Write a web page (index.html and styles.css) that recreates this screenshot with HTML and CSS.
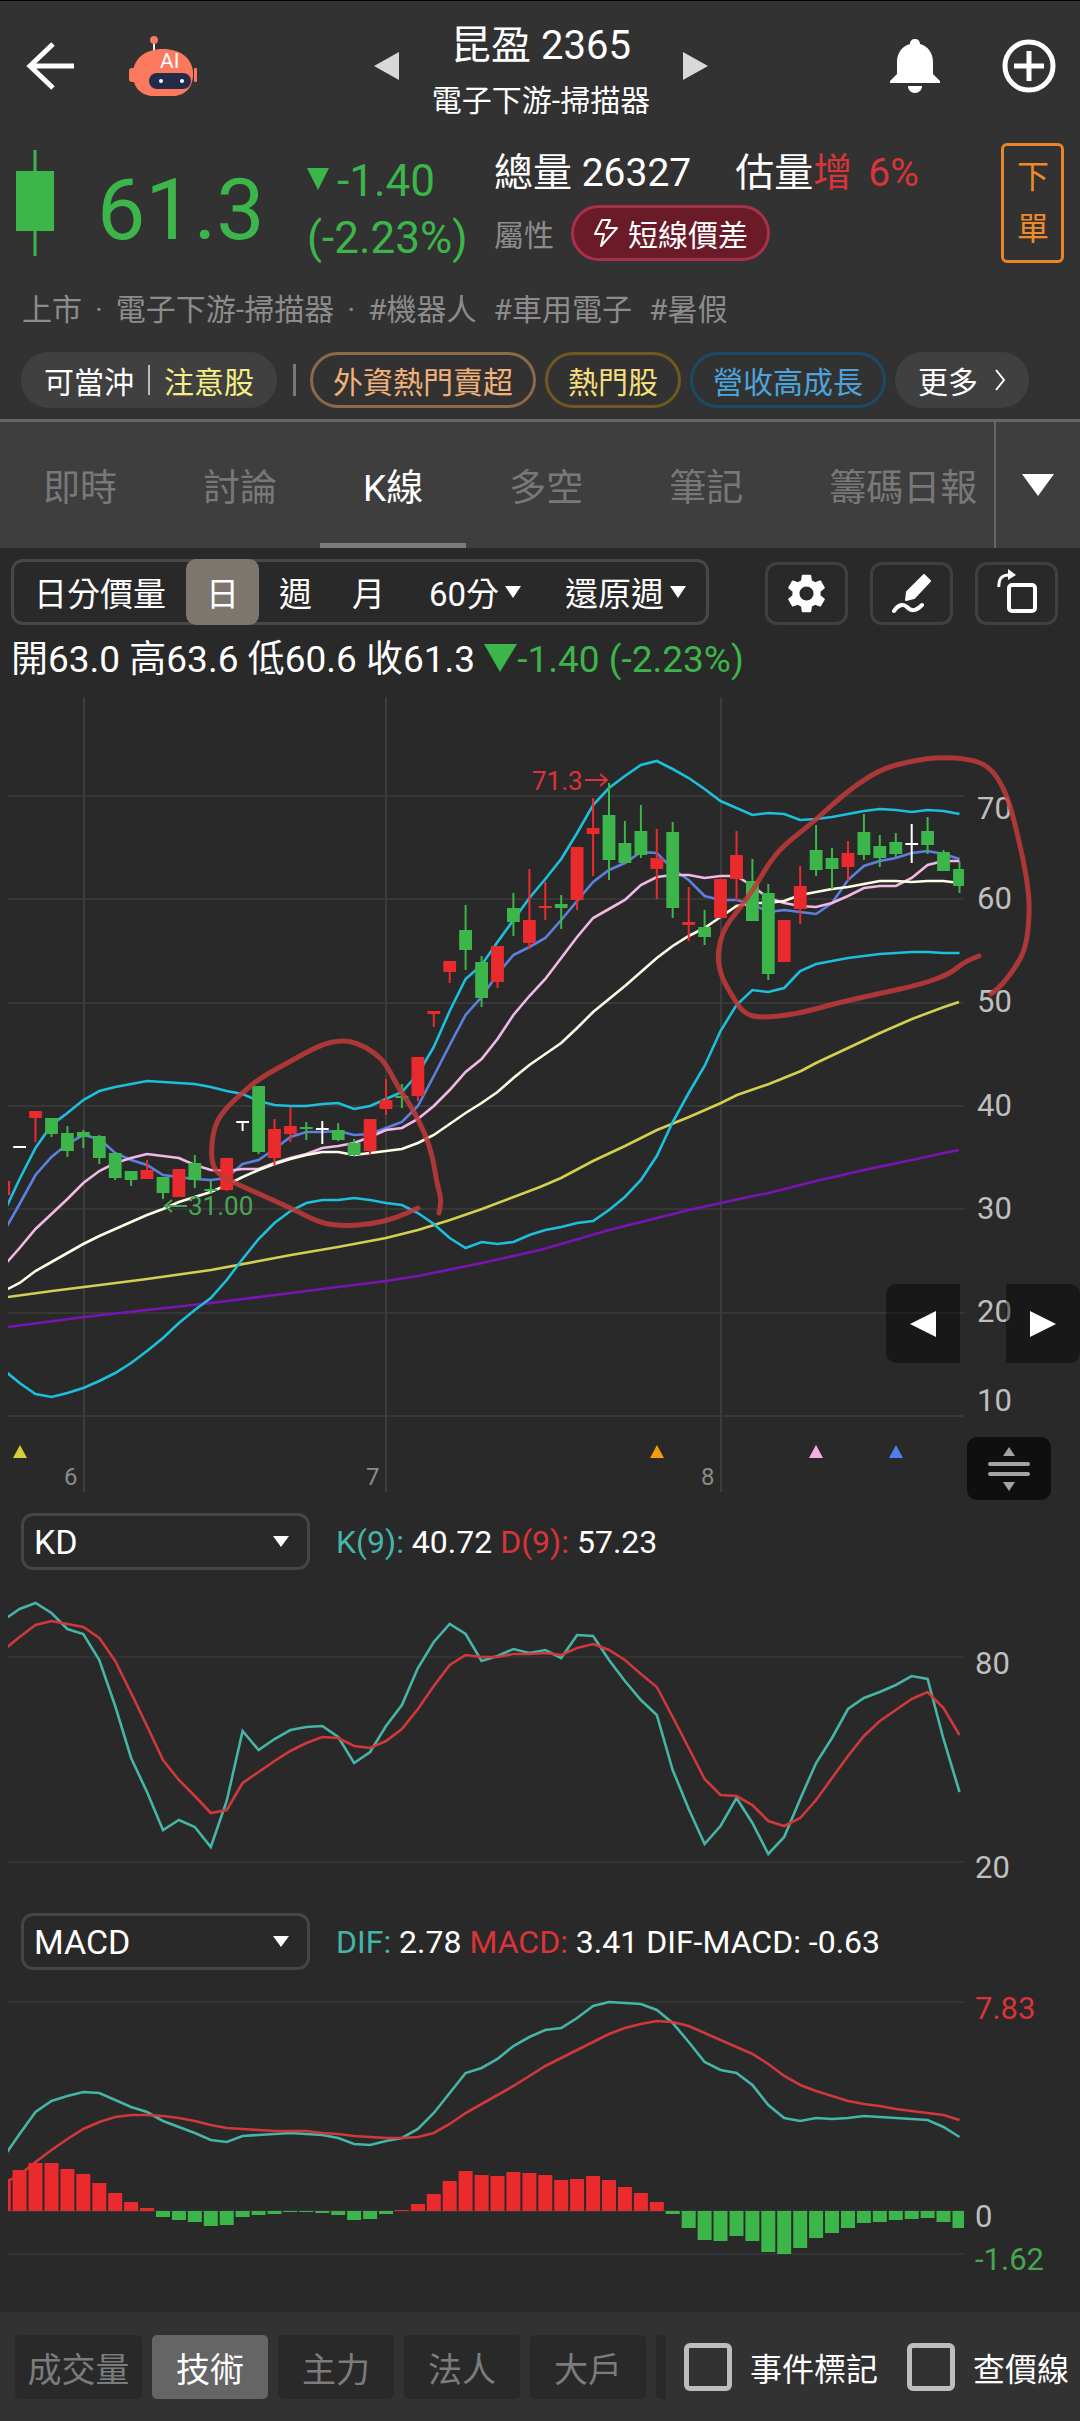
FILE: index.html
```html
<!DOCTYPE html>
<html lang="zh-Hant">
<head>
    <meta charset="UTF-8">
    <meta name="viewport" content="width=device-width, initial-scale=1.0">
    <title>昆盈 2365</title>
    <link rel="stylesheet" href="styles.css">
</head>
<body>
    <header class="top">
        <div class="bar">
            <div class="bar-left">
                <button class="icon-btn" aria-label="返回">
                    <svg width="48" height="50" viewBox="0 0 48 50"><path d="M27 3 4 25l23 22M4 25h44" fill="none" stroke="#fff" stroke-width="5"/></svg>
                </button>
                <button class="icon-btn" aria-label="AI">
                    <svg width="68" height="60" viewBox="0 0 68 60">
                        <path d="M25 5v10" stroke="#eee" stroke-width="2"/>
                        <circle cx="25" cy="4" r="4" fill="#f07a62"/>
                        <rect x="0" y="32" width="9" height="14" rx="3" fill="#fb7a5e"/>
                        <rect x="65" y="32" width="3" height="14" rx="1" fill="#fb7a5e"/>
                        <path d="M4 36C5 22 17 13 34 13s29 9 30 23c1 15-8 24-20 24H24C12 60 3 51 4 36z" fill="#fb7a5e"/>
                        <rect x="20" y="37" width="42" height="16" rx="8" fill="#222c4a"/>
                        <circle cx="32" cy="45" r="2" fill="#fff"/>
                        <circle cx="53" cy="45" r="2" fill="#fff"/>
                        <text x="31" y="32" class="ai">AI</text>
                    </svg>
                </button>
            </div>
            <div class="bar-title">
                <button class="icon-btn" aria-label="上一檔">
                    <svg width="26" height="28" viewBox="0 0 26 28"><path d="M25 0v28L0 14z" fill="#d8d8d8"/></svg>
                </button>
                <div class="names">
                    <h1>昆盈 2365</h1>
                    <p>電子下游-掃描器</p>
                </div>
                <button class="icon-btn" aria-label="下一檔">
                    <svg width="26" height="28" viewBox="0 0 26 28"><path d="M1 0v28l25-14z" fill="#d8d8d8"/></svg>
                </button>
            </div>
            <div class="bar-right">
                <button class="icon-btn" aria-label="通知">
                    <svg width="50" height="54" viewBox="0 0 50 54"><path d="M25 0c3 0 5 2 5 5 8 2 13 9 13 18v12l7 7v2H0v-2l7-7V23c0-9 5-16 13-18 0-3 2-5 5-5zM18 47h14c0 4-3 7-7 7s-7-3-7-7z" fill="#fff"/></svg>
                </button>
                <button class="icon-btn" aria-label="加入自選">
                    <svg width="54" height="54" viewBox="0 0 54 54"><g fill="none" stroke="#fff" stroke-width="5"><circle cx="27" cy="27" r="24"/><path d="M27 12v30M12 27h30"/></g></svg>
                </button>
            </div>
        </div>

        <div class="quote">
            <svg width="38" height="106" viewBox="0 0 38 106"><path d="M19 0v106" stroke="#3cb54a" stroke-width="3"/><rect y="21" width="38" height="60" fill="#3cb54a"/></svg>
            <div class="price">61.3</div>
            <div class="change">
                <div><svg width="22" height="22" viewBox="0 0 22 22"><path d="M0 0h22L11 22z" fill="#3cb54a"/></svg>-1.40</div>
                <div>(-2.23%)</div>
            </div>
            <div class="stats">
                <div class="volume"><span>總量 26327</span><span>估量<b>增</b><b class="pct">6%</b></span></div>
                <div class="kind">
                    <span>屬性</span>
                    <button class="type-pill">
                        <svg width="26" height="30" viewBox="0 0 26 30"><path d="M9 2h8l-4 8h11L8 28l3-12H2z" fill="none" stroke="#fff" stroke-width="2" stroke-linejoin="round"/></svg>短線價差
                    </button>
                </div>
            </div>
            <button class="order">下單</button>
        </div>

        <p class="tags"><span>上市</span><span>·</span><span>電子下游-掃描器</span><span>·</span><span>#機器人</span><span class="tag">#車用電子</span><span class="tag">#暑假</span></p>

        <div class="chips">
            <button class="chip gray">可當沖<i></i><span class="warn">注意股</span></button>
            <i class="sep"></i>
            <button class="chip orange">外資熱門賣超</button>
            <button class="chip gold">熱門股</button>
            <button class="chip blue">營收高成長</button>
            <button class="chip gray more">更多<svg width="12" height="22" viewBox="0 0 12 22"><path d="M2 1l8 10-8 10" fill="none" stroke="#fff" stroke-width="2"/></svg></button>
        </div>
    </header>

    <nav class="tabs">
        <div class="tab-list">
            <a href="#">即時</a>
            <a href="#">討論</a>
            <a href="#" class="active">K線</a>
            <a href="#">多空</a>
            <a href="#">筆記</a>
            <a href="#">籌碼日報</a>
        </div>
        <button class="tab-more" aria-label="更多分頁"><svg width="32" height="22" viewBox="0 0 32 22"><path d="M0 0h32L16 22z" fill="#fff"/></svg></button>
    </nav>

    <main>
        <div class="toolbar">
            <div class="periods">
                <button>日分價量</button>
                <button class="active">日</button>
                <button>週</button>
                <button>月</button>
                <button class="drop">60分<svg width="16" height="12" viewBox="0 0 16 12"><path d="M0 0h16L8 12z" fill="#fff"/></svg></button>
                <button class="drop">還原週<svg width="16" height="12" viewBox="0 0 16 12"><path d="M0 0h16L8 12z" fill="#fff"/></svg></button>
            </div>
            <div class="tools">
                <button aria-label="設定">
                    <svg width="47" height="47" viewBox="0 0 24 24"><path fill="#fff" d="M19.14 12.94c.04-.3.06-.61.06-.94 0-.32-.02-.64-.07-.94l2.03-1.58a.49.49 0 0 0 .12-.61l-1.92-3.32a.488.488 0 0 0-.59-.22l-2.39.96c-.5-.38-1.03-.7-1.62-.94l-.36-2.54a.484.484 0 0 0-.48-.41h-3.84c-.24 0-.43.17-.47.41l-.36 2.54c-.59.24-1.13.57-1.62.94l-2.39-.96c-.22-.08-.47 0-.59.22L2.74 8.87c-.12.21-.08.47.12.61l2.03 1.58c-.05.3-.09.63-.09.94s.02.64.07.94l-2.03 1.58a.49.49 0 0 0-.12.61l1.92 3.32c.12.22.37.29.59.22l2.39-.96c.5.38 1.03.7 1.62.94l.36 2.54c.05.24.24.41.48.41h3.84c.24 0 .44-.17.47-.41l.36-2.54c.59-.24 1.13-.56 1.62-.94l2.39.96c.22.08.47 0 .59-.22l1.92-3.32c.12-.22.07-.47-.12-.61l-2.01-1.58zM12 15.6a3.6 3.6 0 1 1 0-7.2 3.6 3.6 0 0 1 0 7.2z"/></svg>
                </button>
                <button aria-label="畫線">
                    <svg width="40" height="40" viewBox="0 0 40 40"><path d="M32 1l6 6-16 17-8 2 1-8z" fill="#fff" stroke="#fff" stroke-width="2" stroke-linejoin="round"/><path d="M2 37c4-6 9-8 13-4s8 5 15-2" fill="none" stroke="#fff" stroke-width="4" stroke-linecap="round"/></svg>
                </button>
                <button aria-label="旋轉畫面">
                    <svg width="40" height="50" viewBox="0 0 40 50"><rect x="12" y="16" width="26" height="26" rx="3" fill="none" stroke="#fff" stroke-width="4"/><path d="M2 18C1 10 5 6 12 6" fill="none" stroke="#fff" stroke-width="3"/><path d="M11 0l8 6-8 5z" fill="#fff"/></svg>
                </button>
            </div>
        </div>

        <p class="ohlc">開63.0 高63.6 低60.6 收61.3 <span><svg width="33" height="28" viewBox="0 0 33 28"><path d="M0 0h33L16 28z" fill="#3cb54a"/></svg>-1.40 (-2.23%)</span></p>

        <section class="k-chart">
            <svg id="kline" class="chart" viewBox="0 0 1080 810"></svg>
            <button class="move move-left" aria-label="往前"><svg width="26" height="26" viewBox="0 0 26 26"><path d="M26 0v26L0 13z" fill="#fff"/></svg></button>
            <button class="move move-right" aria-label="往後"><svg width="26" height="26" viewBox="0 0 26 26"><path d="M0 0v26l26-13z" fill="#fff"/></svg></button>
            <button class="resize" aria-label="調整高度">
                <svg width="42" height="44" viewBox="0 0 42 44" fill="#a3a3a3"><path d="M21 0l6 9H15zM21 44l6-9H15z"/><rect y="15" width="42" height="4" rx="2"/><rect y="25" width="42" height="4" rx="2"/></svg>
            </button>
        </section>

        <section>
            <div class="indicator">
                <label class="picker"><select aria-label="副圖一"><option>KD</option></select><svg width="16" height="11" viewBox="0 0 16 11"><path d="M0 0h16L8 11z" fill="#fff"/></svg></label>
                <p><span class="teal">K(9):</span> 40.72 <span class="red">D(9):</span> 57.23</p>
            </div>
            <svg id="kd" class="chart" viewBox="0 0 1080 320"></svg>
        </section>

        <section>
            <div class="indicator">
                <label class="picker"><select aria-label="副圖二"><option>MACD</option></select><svg width="16" height="11" viewBox="0 0 16 11"><path d="M0 0h16L8 11z" fill="#fff"/></svg></label>
                <p><span class="teal">DIF:</span> 2.78 <span class="red">MACD:</span> 3.41 DIF-MACD: -0.63</p>
            </div>
            <svg id="macd" class="chart" viewBox="0 0 1080 331"></svg>
        </section>
    </main>

    <footer>
        <div class="groups">
            <button class="wide">成交量</button>
            <button class="active">技術</button>
            <button>主力</button>
            <button>法人</button>
            <button>大戶</button>
            <button aria-label="更多"></button>
        </div>
        <label><input type="checkbox">事件標記</label>
        <label><input type="checkbox">查價線</label>
    </footer>
    <script src="chart.js"></script>
</body>
</html>
```

FILE: styles.css
```css
* {
    margin: 0;
    padding: 0;
    box-sizing: border-box;
}
body {
    background-color: #292929;
    color: #fff;
    font-family: Roboto, "Noto Sans CJK TC", sans-serif;
    font-size: 30px;
}
button {
    background: none;
    border: none;
    color: inherit;
    font: inherit;
    white-space: nowrap;
}
svg {
    display: block;
    flex-shrink: 0;
}

/* header */
.top {
    background-color: #323232;
    border-top: 1px solid #000;
    padding: 15px 0 11px;
}
.bar {
    display: grid;
    grid-template-columns: 1fr auto 1fr;
    padding: 0 24px 0 26px;
}
.bar-left, .bar-right, .bar-title {
    display: flex;
    align-items: center;
}
.bar-left, .bar-right {
    padding-bottom: 10px;
}
.bar-left {
    gap: 55px;
}
.bar-right {
    justify-content: flex-end;
    gap: 62px;
}
.bar-title {
    gap: 32px;
}
.bar-title .icon-btn {
    padding-bottom: 10px;
}
.names {
    text-align: center;
}
.names h1 {
    font-size: 40px;
    font-weight: 400;
    line-height: 60px;
}
.names p {
    line-height: 50px;
}
.ai {
    fill: #fff;
    font-size: 21px;
}

.quote {
    display: grid;
    grid-template-columns: 81px 210px 187px 1fr 63px;
    grid-template-rows: 120px;
    align-items: center;
    margin-top: 17px;
    padding: 0 16px;
}
.price {
    padding-top: 14px;
    color: #3cb54a;
    font-size: 86px;
    line-height: 106px;
}
.change {
    padding-top: 14px;
    color: #3cb54a;
    font-size: 44px;
    line-height: 57px;
}
.change div {
    display: flex;
    gap: 8px;
}
.change svg {
    margin-top: 15px;
}
.volume {
    display: flex;
    gap: 44px;
    font-size: 39px;
    line-height: 60px;
}
.volume b {
    color: #d93438;
    font-weight: 400;
}
.volume .pct {
    margin-left: 16px;
}
.kind {
    display: flex;
    align-items: center;
    gap: 17px;
    height: 60px;
    color: #8c8c8c;
}
.type-pill {
    display: flex;
    align-items: center;
    gap: 9px;
    height: 56px;
    padding: 0 19px;
    border: 3px solid #a8304a;
    border-radius: 28px;
    background-color: #6b1a28;
    color: #fff;
}
.order {
    height: 120px;
    padding: 0 13px;
    border: 3px solid #e8852a;
    border-radius: 6px;
    color: #f08a24;
    font-size: 32px;
    line-height: 52px;
    white-space: normal;
}
.tags {
    display: flex;
    gap: 13px;
    padding: 27px 22px 22px;
    color: #8c8c8c;
    line-height: 40px;
}
.tags .tag {
    margin-left: 4px;
}
.chips {
    display: flex;
    align-items: center;
    gap: 9px;
    padding-left: 21px;
}
.chip {
    display: flex;
    align-items: center;
    height: 56px;
    padding: 0 20px;
    border: 3px solid;
    border-radius: 28px;
}
.chip.gray {
    border-color: #404040;
    background-color: #404040;
}
.chip i {
    width: 2px;
    height: 30px;
    margin: 0 14px;
    background-color: #bbb;
}
.warn {
    color: #f5ef84;
}
.sep {
    width: 3px;
    height: 32px;
    margin: 0 5px 0 7px;
    background-color: #777;
}
.orange {
    border-color: #8c6a48;
    color: #f0b078;
}
.gold {
    border-color: #6e5a1e;
    color: #f5df7a;
}
.blue {
    border-color: #1d4a66;
    color: #4da3dc;
}
.more {
    gap: 16px;
}

/* page tabs */
.tabs {
    display: flex;
    height: 129px;
    border-top: 3px solid #666;
    background-color: #3e3e3e;
}
.tab-list {
    display: flex;
    flex: 1;
    min-width: 0;
    overflow: hidden;
}
.tab-list a {
    padding: 0 43px;
    color: #787878;
    font-size: 37px;
    line-height: 133px;
    text-decoration: none;
    white-space: nowrap;
}
.tab-list .active {
    border-bottom: 5px solid #7b7b7b;
    color: #fff;
}
.tab-more {
    padding: 0 26px;
    border-left: 2px solid #666;
}

/* chart toolbar */
.toolbar {
    display: flex;
    align-items: flex-end;
    justify-content: space-between;
    padding: 11px 22px 0 11px;
}
.periods {
    display: flex;
    height: 66px;
    border: 3px solid #474747;
    border-radius: 12px;
    font-size: 33px;
}
.periods button {
    padding: 0 20px;
}
.periods .active {
    margin: -3px 0;
    border-radius: 10px;
    background-color: #7d766e;
}
.periods .drop {
    display: flex;
    align-items: center;
    gap: 6px;
    padding-left: 24px;
}
.tools {
    display: flex;
    gap: 22px;
}
.tools button {
    display: flex;
    align-items: center;
    justify-content: center;
    width: 83px;
    height: 63px;
    border: 3px solid #404040;
    border-radius: 12px;
}
.ohlc {
    padding: 6px 11px 2px;
    font-size: 37px;
    line-height: 58px;
}
.ohlc span {
    color: #3cb54a;
}
.ohlc svg {
    display: inline-block;
}

/* charts */
.chart {
    width: 100%;
    height: auto;
}
.chart text {
    fill: #bfbfbf;
    font-size: 31px;
}
.chart .month {
    fill: #8a8a8a;
    font-size: 24px;
}
.chart .mark {
    font-size: 26px;
}
.chart .up {
    fill: #d93438;
}
.chart .down {
    fill: #4aa552;
}
.k-chart {
    position: relative;
}
.move {
    position: absolute;
    bottom: 138px;
    width: 74px;
    height: 79px;
    padding: 0 24px;
    background-color: rgba(0, 0, 0, .4);
}
.move-left {
    right: 120px;
    border-radius: 10px 0 0 10px;
}
.move-right {
    right: 0;
    border-radius: 0 10px 10px 0;
}
.resize {
    position: absolute;
    right: 29px;
    bottom: 1px;
    width: 84px;
    height: 63px;
    padding: 0 21px;
    border-radius: 10px;
    background-color: #0f0f0f;
}
.indicator {
    display: flex;
    align-items: center;
    gap: 26px;
    padding: 12px 21px 11px;
    font-size: 32px;
}
.picker {
    position: relative;
    width: 289px;
}
.picker select {
    display: block;
    width: 100%;
    height: 57px;
    padding: 0 10px;
    border: 3px solid #454545;
    border-radius: 12px;
    background-color: #292929;
    color: #fff;
    font-family: inherit;
    font-size: 34px;
    appearance: none;
}
.picker svg {
    position: absolute;
    right: 21px;
    top: 23px;
    pointer-events: none;
}
.teal {
    color: #45b5a8;
}
.red {
    color: #d93438;
}

/* bottom bar */
footer {
    display: flex;
    align-items: center;
    height: 110px;
    padding: 0 11px 0 15px;
    background-color: #323232;
    font-size: 32px;
}
.groups {
    display: flex;
    flex: 1;
    min-width: 0;
    gap: 10px;
    overflow: hidden;
}
.groups button {
    flex: 0 0 116px;
    height: 64px;
    border-radius: 5px;
    background-color: #292929;
    color: #7c7c7c;
    font-size: 34px;
}
.groups .wide {
    flex-basis: 127px;
}
.groups .active {
    background-color: #656565;
    color: #fff;
}
footer label {
    display: flex;
    align-items: center;
    gap: 18px;
    margin-left: 18px;
    white-space: nowrap;
}
footer label + label {
    margin-left: 29px;
}
footer input {
    width: 48px;
    height: 48px;
    border: 5px solid #bdbdbd;
    border-radius: 6px;
    appearance: none;
}
```

FILE: chart.js
```js
const RED = "#eb2a2e"
const GREEN = "#3cb54a"
const WHITE = "#ffffff"

const STEP = 15.93   // distance between two days
const FIRST = 19.6   // x of day 0, series start one day earlier
const LEFT = 8
const RIGHT = 964

const dayX = (i) => (FIRST + STEP * i).toFixed(1)

// [top of body, bottom of body, high, low, color]
const candles = [
    [490, 504, 490, 504, RED],
    [455, 457, 455, 457, WHITE],
    [420, 427, 420, 451, RED],
    [427, 443, 427, 446, GREEN],
    [442, 460, 435, 466, GREEN],
    [441, 446, 439, 457, GREEN],
    [445, 467, 444, 473, GREEN],
    [462, 487, 462, 489, GREEN],
    [480, 489, 480, 495, GREEN],
    [479, 488, 469, 488, RED],
    [486, 502, 486, 508, GREEN],
    [478, 506, 478, 506, RED],
    [472, 489, 464, 497, GREEN],
    [498, 500, 490, 503, GREEN],
    [467, 499, 467, 500, RED],
    [430, 432, 430, 440, WHITE],
    [395, 461, 395, 463, GREEN],
    [438, 467, 428, 475, RED],
    [435, 443, 416, 451, RED],
    [436, 438, 431, 449, GREEN],
    [437, 439, 430, 453, WHITE],
    [439, 449, 432, 450, GREEN],
    [452, 464, 448, 465, GREEN],
    [428, 460, 428, 463, RED],
    [409, 418, 388, 424, RED],
    [405, 407, 393, 417, GREEN],
    [366, 405, 366, 410, RED],
    [320, 323, 320, 336, RED],
    [270, 281, 270, 292, RED],
    [239, 259, 214, 279, GREEN],
    [271, 307, 265, 316, GREEN],
    [255, 291, 255, 297, RED],
    [217, 231, 202, 245, GREEN],
    [229, 252, 178, 258, RED],
    [215, 217, 191, 229, RED],
    [213, 217, 204, 238, GREEN],
    [156, 209, 156, 219, RED],
    [137, 143, 107, 185, RED],
    [124, 169, 92, 189, GREEN],
    [152, 172, 130, 172, GREEN],
    [140, 164, 114, 167, GREEN],
    [167, 178, 138, 208, RED],
    [141, 217, 131, 227, GREEN],
    [231, 234, 196, 250, RED],
    [236, 246, 219, 254, GREEN],
    [188, 227, 188, 227, RED],
    [164, 188, 140, 210, RED],
    [190, 230, 168, 230, GREEN],
    [202, 283, 193, 289, GREEN],
    [229, 271, 229, 271, RED],
    [195, 218, 175, 233, RED],
    [159, 179, 134, 185, GREEN],
    [167, 178, 157, 198, GREEN],
    [162, 176, 150, 190, RED],
    [141, 164, 123, 169, GREEN],
    [155, 167, 144, 176, GREEN],
    [151, 163, 142, 166, GREEN],
    [152, 154, 133, 172, WHITE],
    [140, 154, 126, 163, GREEN],
    [161, 180, 159, 180, GREEN],
    [178, 195, 171, 202, GREEN]
]

const bandTop = [522,488,457,434,422,409,400,396,393,390,391,392,393,396,400,403,410,414,415,415,413,412,418,415,408,401,383,356,320,288,274,251,229,207,188,168,142,114,97,85,74,70,78,87,98,110,117,124,122,123,129,128,126,123,120,118,119,121,119,120,123]
const bandBottom = [679,692,703,706,702,697,690,682,672,660,647,632,619,607,589,568,548,532,520,512,509,509,507,509,512,514,522,533,547,557,551,553,551,544,539,536,532,530,519,506,489,465,431,402,375,340,314,299,301,297,280,273,270,267,265,263,262,261,261,262,262]
const ma5 = [541,513,484,466,453,444,448,462,469,474,484,486,488,489,487,473,469,458,446,441,441,440,444,443,437,431,415,385,354,324,306,283,264,256,247,229,210,191,179,172,161,162,178,189,205,209,209,213,221,219,221,223,212,189,175,170,167,162,160,163,168]
const ma10 = [575,557,538,523,508,492,480,472,467,463,465,467,474,479,480,478,478,472,467,463,457,455,452,446,439,437,428,415,399,381,368,348,324,305,288,267,246,227,218,209,194,186,184,184,187,185,185,195,207,212,215,216,212,205,197,195,195,187,174,170,170]
const ma20 = [600,592,580,571,562,553,545,538,531,524,518,511,506,501,494,486,479,473,468,464,461,461,464,462,460,458,452,444,433,422,412,401,387,374,363,352,337,321,308,295,281,267,255,245,237,226,215,212,212,210,204,201,198,196,193,190,190,191,190,190,192]
const ma60 = "8,606 52,600 100,594 147,588 211,579 259,570 291,564 338,556 386,547 418,539 450,529 482,518 540,496 561,487 593,470 625,455 657,439 689,426 721,412 737,404 769,393 801,380 816,372 848,357 880,342 912,328 944,316 959,311"
const ma120 = "8,636 84,626 147,619 211,612 291,602 338,596 386,590 418,585 482,572 540,559 561,553 609,539 657,527 689,519 721,512 753,505 769,502 816,490 864,479 912,469 944,462 959,459"

const kLine = [39,28,22,32,48,53,79,125,177,211,249,239,246,266,220,150,169,158,149,146,145,156,182,171,145,124,87,61,43,53,80,75,68,72,69,77,54,55,79,100,119,134,189,228,263,245,217,242,273,256,218,182,157,128,117,111,104,95,98,158,211]
const dLine = [69,56,44,40,43,46,57,80,112,145,179,199,215,232,229,202,191,180,170,162,156,157,165,167,160,148,128,105,84,74,76,76,73,73,72,74,67,63,69,79,93,106,136,167,198,214,215,224,240,245,237,219,197,175,155,140,129,118,111,127,154]

const dif = [172,149,128,117,112,108,109,116,123,128,137,143,148,155,157,151,150,149,148,149,150,153,159,160,156,153,145,129,109,89,85,76,63,54,47,45,35,24,20,21,22,28,40,59,79,87,89,101,121,134,137,134,135,134,132,133,134,135,136,143,152]
const macd = [198,190,177,165,154,145,138,133,131,131,132,134,137,141,144,145,146,147,147,147,148,149,151,152,153,153,152,148,140,129,120,111,102,92,83,75,67,59,51,45,41,38,39,43,50,57,64,71,81,92,101,107,112,117,120,122,125,127,129,131,136]
const bars = [32,41,48,48,42,37,28,18,9,3,-6,-9,-11,-15,-14,-6,-4,-3,-1,-1,-2,-4,-9,-8,-3,1,7,17,30,40,36,35,39,38,36,31,32,35,31,24,18,9,-3,-17,-29,-30,-25,-30,-41,-43,-37,-27,-22,-17,-12,-11,-9,-8,-7,-11,-17]

// notes drawn by hand over the chart
const circles = [
    [[439,522],[442,510],[437,493],[433,467],[425,442],[411,415],[399,398],[386,373],[375,362],[358,352],[341,349],[320,354],[289,371],[260,387],[241,403],[226,417],[215,433],[211,457],[213,478],[226,488],[248,498],[293,518],[320,532],[344,535],[372,533],[396,527],[418,517]],
    [[979,265],[965,270],[950,283],[919,294],[877,303],[833,313],[798,323],[760,327],[743,322],[731,303],[721,285],[717,263],[724,237],[740,217],[757,193],[769,172],[783,155],[812,132],[833,113],[857,93],[884,77],[912,70],[939,66],[970,68],[988,75],[1000,90],[1010,113],[1019,150],[1027,187],[1030,220],[1026,257],[1015,277],[1001,295],[991,303]]
]

function polyline(points, color) {
    return `<polyline points="${points}" fill="none" stroke="${color}" stroke-width="2.6"/>`
}

function line(values, color) {
    return polyline(values.map((y, n) => dayX(n - 1) + "," + y).join(" "), color)
}

function gridH(list, color) {
    return list.map((y) => `<path d="M${LEFT} ${y}H${RIGHT}" stroke="${color}" stroke-width="2"/>`).join("")
}

function label(x, y, text, cls) {
    return `<text x="${x}" y="${y}" class="${cls || ""}">${text}</text>`
}

function smooth(p) {
    let d = `M${p[0]}`
    for (let i = 1; i < p.length - 1; i++) {
        const mx = (p[i][0] + p[i + 1][0]) / 2
        const my = (p[i][1] + p[i + 1][1]) / 2
        d += `Q${p[i]} ${mx},${my}`
    }
    return d + `L${p[p.length - 1]}`
}

function clip(id, height, content) {
    return `<clipPath id="${id}"><rect x="${LEFT}" y="0" width="${RIGHT - LEFT}" height="${height}"/></clipPath><g clip-path="url(#${id})">${content}</g>`
}

function drawKline() {
    let out = gridH([105, 208, 312, 415, 518, 622, 725], "#373737")
    for (const x of [84, 386, 721]) {
        out += `<path d="M${x} 6V801" stroke="#3c3c3c" stroke-width="2"/>`
    }

    let body = polyline(ma120, "#7a14b4") + polyline(ma60, "#d4cf50")
    body += line(bandTop, "#1cc0dc") + line(bandBottom, "#1cc0dc")
    body += line(ma5, "#5c80e0") + line(ma10, "#f2b8e6") + line(ma20, "#fffde8")
    candles.forEach((c, n) => {
        const x = Number(dayX(n - 1))
        body += `<path d="M${x} ${c[2]}V${c[3]}" stroke="${c[4]}" stroke-width="2"/>`
        body += `<rect x="${x - 6.4}" y="${c[0]}" width="12.8" height="${c[1] - c[0]}" fill="${c[4]}"/>`
    })
    out += clip("k-area", 810, body)

    const prices = [[70, 128], [60, 218], [50, 321], [40, 425], [30, 528], [20, 631], [10, 720]]
    prices.forEach((p) => { out += label(977, p[1], p[0]) })
    out += label(64, 794, 6, "month") + label(366, 794, 7, "month") + label(701, 794, 8, "month")
    out += label(532, 99, "71.3", "mark up") + label(188, 524, "31.00", "mark down")
    out += `<path d="M585 89h22m-7-6l7 6-7 6" fill="none" stroke="#d93438" stroke-width="2"/>`
    out += `<path d="M187 515h-22m7-6l-7 6 7 6" fill="none" stroke="#4aa552" stroke-width="2"/>`

    const signals = [[20, "#d4cd3c"], [657, "#f09c0c"], [816, "#f9b0e8"], [896, "#4f7df0"]]
    signals.forEach((s) => { out += `<path d="M${s[0]} 754l7 13h-14z" fill="${s[1]}"/>` })

    circles.forEach((p) => {
        out += `<path d="${smooth(p)}" fill="none" stroke="#c23a3a" stroke-opacity=".85" stroke-width="5" stroke-linecap="round"/>`
    })
    document.getElementById("kline").innerHTML = out
}

function drawKd() {
    let out = gridH([76, 281], "#333")
    out += clip("kd-area", 320, line(kLine, "#45b5a8") + line(dLine, "#d0383b"))
    out += label(975, 93, 80) + label(975, 297, 20)
    document.getElementById("kd").innerHTML = out
}

function drawMacd() {
    // 205 units from 0 up to 7.83, zero line at 230
    const toY = (v) => Math.round(v * 1.017 + 1)
    const zero = toY(225)
    let out = gridH([toY(20), zero, toY(267)], "#333")
    let body = line(dif.map(toY), "#45b5a8") + line(macd.map(toY), "#d0383b")
    bars.forEach((h, n) => {
        const x = Number(dayX(n - 1)) - 7
        body += `<rect x="${x}" y="${h > 0 ? zero - h : zero}" width="14" height="${Math.abs(h)}" fill="${h > 0 ? RED : GREEN}"/>`
    })
    out += clip("macd-area", 331, body)
    out += label(975, 38, "7.83", "up") + label(975, 246, "0") + label(975, 289, "-1.62", "down")
    document.getElementById("macd").innerHTML = out
}

drawKline()
drawKd()
drawMacd()
```
